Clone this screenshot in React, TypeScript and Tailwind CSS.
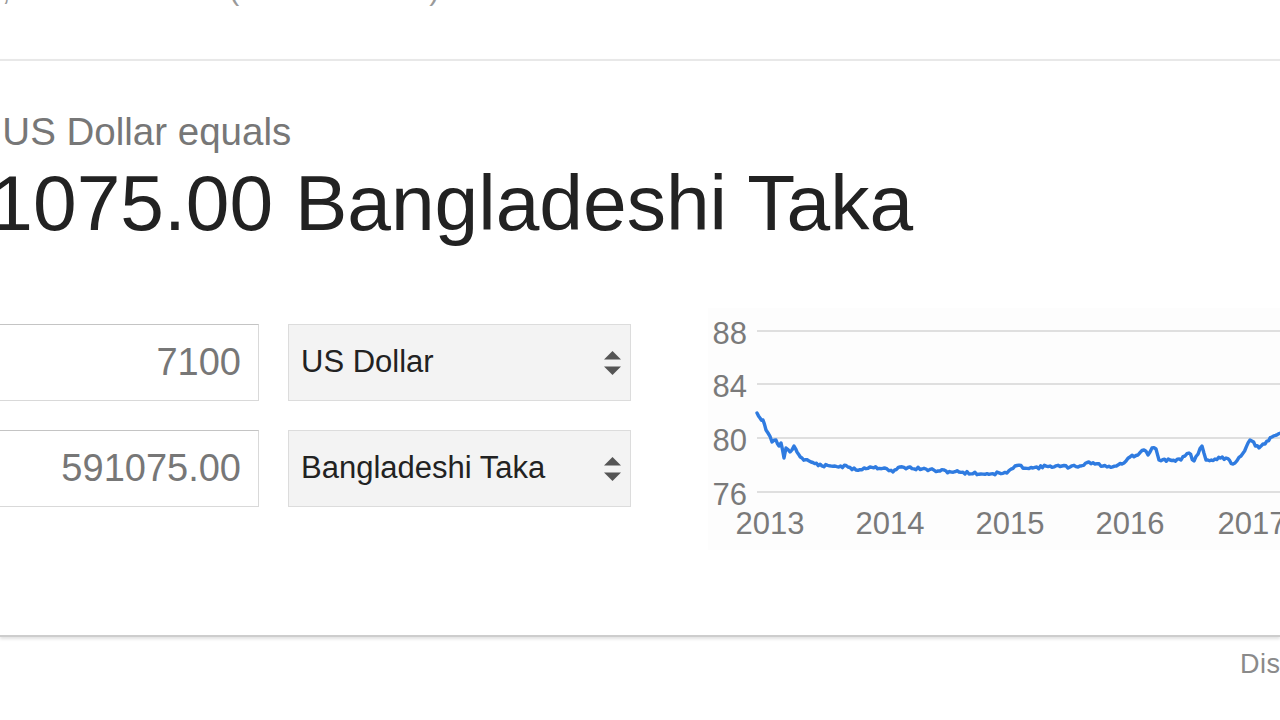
import React from "react";

const KEY: [number, number][] = [
  [757, 413], [760, 418], [763, 420], [766, 430], [768, 433], [772, 442], [776, 440], [779, 446],
  [781, 443], [784, 458], [786, 448], [790, 452], [794, 446], [797, 452], [802, 458], [811, 462],
  [822, 466], [835, 466], [848, 467], [856, 470], [870, 467], [885, 468], [893, 472], [900, 467],
  [922, 469], [940, 471], [959, 472], [981, 474], [1007, 473], [1015, 466], [1033, 468], [1050, 466],
  [1070, 467], [1080, 466], [1089, 462], [1107, 467], [1122, 464], [1130, 457], [1138, 455],
  [1144, 450], [1148, 455], [1152, 448], [1156, 449], [1159, 460], [1170, 460], [1181, 460],
  [1185, 456], [1189, 453], [1194, 461], [1202, 446], [1206, 460], [1215, 459], [1226, 458],
  [1233, 464], [1241, 456], [1250, 440], [1259, 448], [1265, 444], [1272, 437], [1281, 433],
];

function buildPath(): string {
  const pts: string[] = [];
  let seed = 11;
  const rnd = () => {
    seed = (seed * 9301 + 49297) % 233280;
    return seed / 233280;
  };
  for (let i = 0; i < KEY.length - 1; i++) {
    const [x0, y0] = KEY[i];
    const [x1, y1] = KEY[i + 1];
    const steps = Math.max(1, Math.round((x1 - x0) / 2));
    for (let s = 0; s < steps; s++) {
      const t = s / steps;
      const x = x0 + (x1 - x0) * t;
      const y = y0 + (y1 - y0) * t + (s === 0 ? 0 : (rnd() - 0.5) * 3);
      pts.push(`${(x - 705).toFixed(1)},${(y - 305).toFixed(1)}`);
    }
  }
  const [lx, ly] = KEY[KEY.length - 1];
  pts.push(`${lx - 705},${ly - 305}`);
  return "M" + pts.join(" L");
}

const Arrows = () => (
  <svg width="17" height="24" viewBox="0 0 17 24" className="shrink-0">
    <polygon points="0,8.5 8.5,0 17,8.5" fill="#555" />
    <polygon points="0,15.5 17,15.5 8.5,24" fill="#555" />
  </svg>
);

function Chart() {
  const grid = [26, 79, 133, 187];
  const ylabels = [
    { t: "88", y: 39 },
    { t: "84", y: 92 },
    { t: "80", y: 146 },
    { t: "76", y: 200 },
  ];
  const xlabels = [
    { t: "2013", x: 65 },
    { t: "2014", x: 185 },
    { t: "2015", x: 305 },
    { t: "2016", x: 425 },
    { t: "2017", x: 547 },
  ];
  return (
    <svg width="600" height="250" viewBox="0 0 600 250" className="shrink-0 block">
      <rect x="3" y="3" width="600" height="242" fill="#fdfdfd" />
      {grid.map((y) => (
        <line key={y} x1="52" x2="600" y1={y} y2={y} stroke="#d4d4d4" strokeWidth="1.6" />
      ))}
      {ylabels.map((l) => (
        <text
          key={l.t}
          x="42"
          y={l.y}
          textAnchor="end"
          fontSize="31"
          fill="#7a7a7a"
          fontFamily="'Liberation Sans', Arial, sans-serif"
        >
          {l.t}
        </text>
      ))}
      {xlabels.map((l) => (
        <text
          key={l.t}
          x={l.x}
          y="229"
          textAnchor="middle"
          fontSize="31"
          fill="#7a7a7a"
          fontFamily="'Liberation Sans', Arial, sans-serif"
        >
          {l.t}
        </text>
      ))}
      <path d={buildPath()} fill="none" stroke="#2f7be0" strokeWidth="3.4" strokeLinejoin="round" strokeLinecap="round" />
    </svg>
  );
}

export default function App() {
  return (
    <div className="w-[1280px] h-[720px] overflow-hidden bg-white font-['Liberation_Sans',Arial,sans-serif]">
      {/* clipped line above */}
      <div className="h-[59px] overflow-hidden">
        <div className="-mt-[30px] text-[30px] leading-[40px] text-[#9a9a9a] whitespace-nowrap">
          <span className="ml-[2px]">,</span>
          <span className="ml-[219px]">(</span>
          <span className="ml-[190px]">)</span>
        </div>
      </div>

      {/* card */}
      <div className="h-[578px] border-t-2 border-t-[#e8e8e8] border-b-2 border-b-[#cdcdcd] shadow-[0_2px_3px_rgba(0,0,0,0.12)] overflow-hidden">
        <div className="pt-[49px] ml-[-94px] text-[38.5px] leading-[44px] text-[#777] whitespace-nowrap">
          7100 US Dollar equals
        </div>
        <div className="mt-[5px] ml-[-98px] text-[78.5px] leading-[88px] text-[#222] whitespace-nowrap">
          591075.00 Bangladeshi Taka
        </div>

        <div className="mt-[58px] flex items-start">
          <div className="pt-[19px] ml-[-41px] flex flex-col gap-[29px]">
            <div className="flex gap-[29px]">
              <div className="w-[300px] h-[77px] border border-[#d9d9d9] border-t-[#c4c4c4] bg-white flex items-center justify-end pr-[17px] text-[38px] text-[#777]">
                7100
              </div>
              <div className="w-[343px] h-[77px] border border-[#dcdcdc] bg-[#f3f3f3] flex items-center pl-[12px] pr-[9px] text-[31px] text-[#222]">
                <span>US Dollar</span>
                <span className="ml-auto flex">
                  <Arrows />
                </span>
              </div>
            </div>
            <div className="flex gap-[29px]">
              <div className="w-[300px] h-[77px] border border-[#d9d9d9] border-t-[#c4c4c4] bg-white flex items-center justify-end pr-[17px] text-[38px] text-[#777]">
                591075.00
              </div>
              <div className="w-[343px] h-[77px] border border-[#dcdcdc] bg-[#f3f3f3] flex items-center pl-[12px] pr-[9px] text-[31px] text-[#222]">
                <span>Bangladeshi Taka</span>
                <span className="ml-auto flex">
                  <Arrows />
                </span>
              </div>
            </div>
          </div>
          <div className="ml-[74px]">
            <Chart />
          </div>
        </div>
      </div>

      {/* footer */}
      <div className="mt-[11px] ml-[1240px] text-[27px] leading-[32px] tracking-[0.5px] text-[#8a8a8a] whitespace-nowrap">
        Disclaimer
      </div>
    </div>
  );
}
